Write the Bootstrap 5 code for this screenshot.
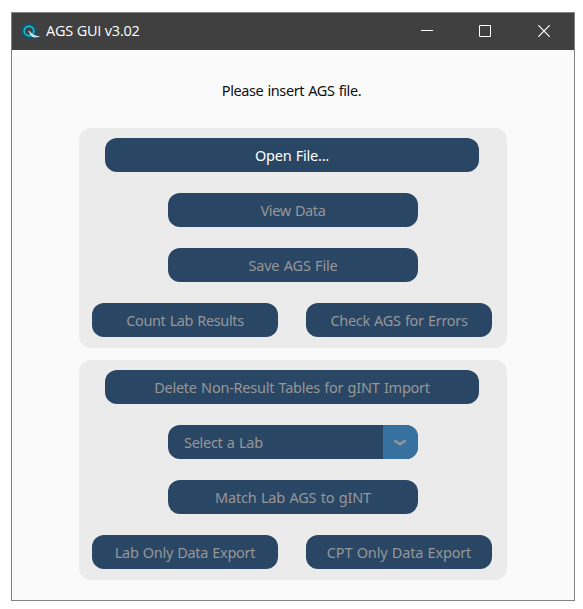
<!DOCTYPE html>
<html lang="en">
<head>
<meta charset="utf-8">
<meta name="viewport" content="width=device-width, initial-scale=1">
<title>AGS GUI v3.02</title>
<link href="https://cdn.jsdelivr.net/npm/bootstrap@5.3.0/dist/css/bootstrap.min.css" rel="stylesheet">
<style>
body { font-family: Tahoma, "Noto Sans", sans-serif; font-size: 14.5px; line-height: 20px; background: #fff; }
.app-window { width: 564px; height: 589px; margin: 12px 0 0 11px; border: 1px solid #838383; background: #fafafa; }
.title-bar { height: 37px; background: #404040; color: #fff; padding-left: 9px; }
.title-text { font-family: "Segoe UI", "Open Sans", sans-serif; font-size: 14.5px; letter-spacing: -.2px; margin-left: 5px; padding-bottom: 1px; }
.win-controls { margin-right: 1px; }
.win-btn { width: 58px; height: 37px; background: none; border: 0; padding: 0 1px 1px 0; color: #fff; }
.win-btn:last-child { width: 59px; padding-right: 0; }
.win-btn svg { display: block; margin: auto; }
.prompt { margin: 30px 0 28px; padding-right: 3px; color: #101010; letter-spacing: -.41px; word-spacing: .8px; }
.panel { width: 428px; height: 220px; margin-left: 67px; padding-top: 10px; gap: 21px; border-radius: 12px; background: #ebebeb; }
.panel + .panel { margin-top: 12px; }
.act { --bs-btn-border-width: 0; --bs-btn-padding-y: 0; --bs-btn-padding-x: 0; --bs-btn-font-size: 14.5px; --bs-btn-border-radius: 12px;
  --bs-btn-bg: #2a4665; --bs-btn-color: #fff; --bs-btn-disabled-bg: #2a4665; --bs-btn-disabled-color: #979797; --bs-btn-disabled-opacity: 1;
  --bs-btn-hover-bg: #36719f; --bs-btn-hover-color: #fff; height: 34px; line-height: 35px; white-space: nowrap; letter-spacing: -.24px; word-spacing: .8px; }
.fit-loose { letter-spacing: -.18px; }
.fit-snug { letter-spacing: -.31px; }
.fit-tight { letter-spacing: -.38px; }
.w-long { width: 374px; margin-right: 2px; }
.w-mid { width: 250px; }
.w-half { width: 186px; }
.pair { gap: 28px; margin-right: 2px; }
.picker { height: 34px; border-radius: 12px; background: #2a4665; color: #979797; }
.picker-text { padding-left: 16px; line-height: 35px; letter-spacing: -.28px; word-spacing: .8px; }
.picker-arrow { width: 35px; padding: 2px 2px 0 0; background: #36719f; }
</style>
</head>
<body>
<main class="app-window">
  <header class="title-bar d-flex align-items-center">
    <svg width="20" height="17" viewBox="0 0 20 17" fill="none">
      <circle cx="8" cy="8.2" r="6.2" stroke="#145066" stroke-width="3.6"/>
      <circle cx="8" cy="8" r="4.8" stroke="#16b5d2" stroke-width="1.9"/>
      <path d="M7 7.8C10 7.6 10.4 13.2 19.4 13.3C13.8 15.6 10.6 14.4 9 11.2C8.4 9.9 7.9 8.8 7 7.8Z" fill="#b9eafa"/>
    </svg>
    <span class="title-text">AGS GUI v3.02</span>
    <div class="win-controls d-flex ms-auto">
      <button class="win-btn" aria-label="Minimize"><svg width="12" height="12"><path d="M0 5.5H12" stroke="#fff"/></svg></button>
      <button class="win-btn" aria-label="Maximize"><svg width="12" height="12"><path d="M.5.5H11.5V11.5H.5Z" fill="none" stroke="#fff"/></svg></button>
      <button class="win-btn" aria-label="Close"><svg width="12" height="12"><path d="M.3.3L11.7 11.7M11.7.3L.3 11.7" stroke="#fff" stroke-width="1.2"/></svg></button>
    </div>
  </header>
  <p class="prompt text-center">Please insert AGS file.</p>
  <section class="panel d-flex flex-column align-items-center">
    <button class="btn act w-long">Open File...</button>
    <button class="btn act w-mid fit-tight" disabled>View Data</button>
    <button class="btn act w-mid fit-loose" disabled>Save AGS File</button>
    <div class="pair d-flex">
      <button class="btn act w-half fit-tight" disabled>Count Lab Results</button>
      <button class="btn act w-half fit-snug" disabled>Check AGS for Errors</button>
    </div>
  </section>
  <section class="panel d-flex flex-column align-items-center">
    <button class="btn act w-long" disabled>Delete Non-Result Tables for gINT Import</button>
    <div class="picker w-mid d-flex overflow-hidden">
      <span class="picker-text flex-grow-1">Select a Lab</span>
      <span class="picker-arrow d-flex align-items-center justify-content-center">
        <svg width="14" height="8" viewBox="0 0 14 8" fill="none"><path d="M2.2 2.2L7 5.2L11.8 2.2" stroke="#979797" stroke-width="2.6" stroke-linecap="round" stroke-linejoin="round"/><path d="M2.4 2.3L4.2 3.5M11.6 2.3L9.8 3.5" stroke="#5c829f" stroke-width=".8"/></svg>
      </span>
    </div>
    <button class="btn act w-mid fit-loose" disabled>Match Lab AGS to gINT</button>
    <div class="pair d-flex">
      <button class="btn act w-half fit-snug" disabled>Lab Only Data Export</button>
      <button class="btn act w-half fit-loose" disabled>CPT Only Data Export</button>
    </div>
  </section>
</main>
<script src="https://cdn.jsdelivr.net/npm/bootstrap@5.3.0/dist/js/bootstrap.bundle.min.js"></script>
</body>
</html>
